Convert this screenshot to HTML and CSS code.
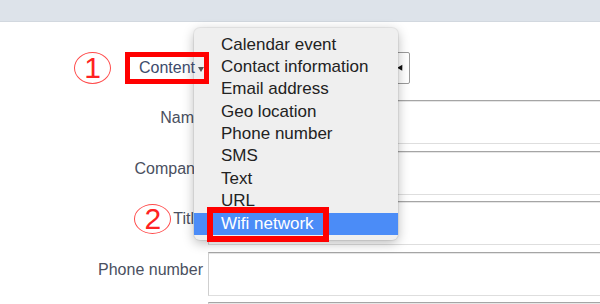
FILE: index.html
```html
<!doctype html>
<html>
<head>
  <title>QR content</title>
  <meta charset="utf-8"/>
  <link rel="stylesheet" href="styles.css">
</head>
<body>
  <div class="Topbar"></div>

  <form class="Form">
    <div class="Form__Row Form__Row--select">
      <div class="Form__Label Form__Label--picker">
        <span class="Mark Mark--one">1</span>
        <span class="Picker">Content<i class="Picker__Arrow"></i></span>
      </div>
      <div class="Select"><i class="Select__Arrow"></i></div>
    </div>
    <div class="Form__Row">
      <label class="Form__Label"><span class="Form__Text">Name</span></label>
      <div class="Input"></div>
    </div>
    <div class="Form__Row">
      <label class="Form__Label"><span class="Form__Text">Company</span></label>
      <div class="Input"></div>
    </div>
    <div class="Form__Row">
      <label class="Form__Label">
        <span class="Mark Mark--two">2</span>
        <span class="Form__Text">Title</span>
      </label>
      <div class="Input"></div>
    </div>
    <div class="Form__Row">
      <label class="Form__Label"><span class="Form__Text">Phone number</span></label>
      <div class="Input"></div>
    </div>
    <div class="Form__Row">
      <label class="Form__Label"></label>
      <div class="Input"></div>
    </div>
  </form>

  <ul class="Menu">
    <li class="Menu__Item">Calendar event</li>
    <li class="Menu__Item">Contact information</li>
    <li class="Menu__Item">Email address</li>
    <li class="Menu__Item">Geo location</li>
    <li class="Menu__Item">Phone number</li>
    <li class="Menu__Item">SMS</li>
    <li class="Menu__Item">Text</li>
    <li class="Menu__Item">URL</li>
    <li class="Menu__Item Menu__Item--active">Wifi network<span class="Highlight"></span></li>
  </ul>
</body>
</html>
```

FILE: styles.css
```css
body {
  background-color: #fff;
  font-family: "Liberation Sans", Arial, sans-serif;
  margin: 0;
  width: 600px;
  height: 304px;
  overflow: hidden;
  position: relative;
}

.Topbar {
  background-color: #dde3ea;
  border-bottom: 1px solid #d2d8df;
  height: 21px;
}

.Form {
  display: flex;
  flex-direction: column;
  gap: 6.5px;
  padding-top: 30px;
}

.Form__Row {
  display: grid;
  grid-template-columns: 208px 420px;
}
.Form__Row--select {
  margin-bottom: 9.5px;
}

.Form__Label {
  display: flex;
  justify-content: flex-end;
  align-items: flex-start;
  padding-right: 5px;
  color: #4a5060;
  font-size: 16px;
}
.Form__Label--picker {
  align-items: center;
  padding-right: 0;
  margin-right: -1px;
  gap: 14px;
}
.Form__Text {
  line-height: 18px;
  padding-top: 9px;
}

.Mark {
  border: 1.5px solid #ff4a4a;
  border-radius: 50%;
  box-sizing: border-box;
  color: #f22;
  display: flex;
  align-items: center;
  justify-content: center;
  font-size: 30px;
  line-height: 1;
}
.Mark--one {
  width: 37px;
  height: 32px;
}
.Mark--two {
  width: 37px;
  height: 30px;
  margin-top: 3px;
  margin-right: 2px;
}

.Picker {
  position: relative;
  z-index: 2;
  box-sizing: border-box;
  border: 5px solid #ff0000;
  color: #3d4b6c;
  display: flex;
  align-items: center;
  height: 32px;
  width: 84px;
  padding-left: 9px;
}
.Picker__Arrow {
  border-left: 3px solid transparent;
  border-right: 3px solid transparent;
  border-top: 5px solid #555;
  margin-left: 3px;
  margin-top: 2px;
}

.Select {
  background-color: #fff;
  border: 1px solid #9a9a9a;
  border-radius: 2px;
  box-sizing: border-box;
  display: flex;
  align-items: center;
  justify-content: flex-end;
  height: 32px;
  width: 202px;
  padding-right: 5px;
}
.Select__Arrow {
  border-left: 3px solid transparent;
  border-right: 3px solid transparent;
  border-top: 5px solid #111;
  transform: rotate(-30deg);
}

.Input {
  border: 1px solid #cfcfcf;
  border-top-color: #a5a5a5;
  border-bottom-color: #dedede;
  box-shadow: inset 0 1px 0 #e6e6e6;
  box-sizing: border-box;
  height: 44px;
}

.Menu {
  background-color: #efefef;
  border-radius: 6px;
  box-shadow: 0 3px 12px rgba(0, 0, 0, .28), 0 0 0 1px rgba(0, 0, 0, .06);
  list-style: none;
  margin: 0;
  padding: 5.5px 0 5px;
  position: absolute;
  left: 194px;
  top: 28px;
  width: 204px;
  z-index: 1;
}
.Menu__Item {
  color: #222;
  font-size: 17px;
  height: 22.4px;
  line-height: 22.4px;
  padding-left: 27px;
  position: relative;
}
.Menu__Item--active {
  background-color: #4b8cf7;
  color: #fff;
}

.Highlight {
  border: 6px solid #ff0000;
  box-sizing: border-box;
  position: absolute;
  left: 13px;
  top: -6px;
  width: 122px;
  height: 35px;
}
```
